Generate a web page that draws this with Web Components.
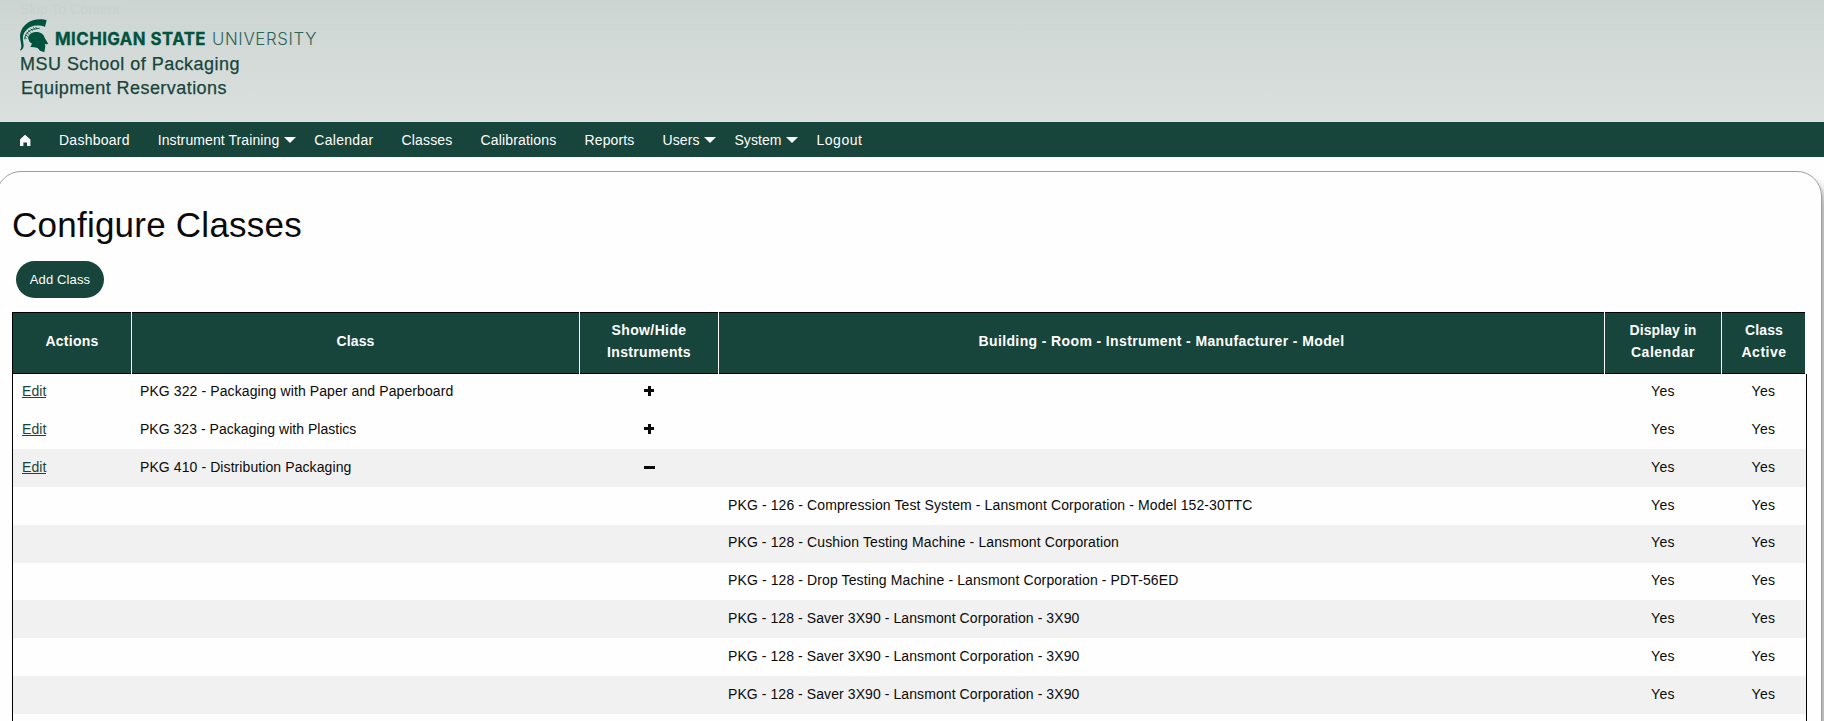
<!DOCTYPE html>
<html lang="en">
<head>
<meta charset="utf-8">
<title>Configure Classes</title>
<style>
html,body{margin:0;height:100%;overflow:hidden;background:#fefefe;font-family:"Liberation Sans",Arial,sans-serif;color:#0a0a0a}
</style>
</head>
<body>
<app-page></app-page>
<script>
const define=(name,html,setup)=>customElements.define(name,class extends HTMLElement{
  connectedCallback(){
    if(this.shadowRoot)return;
    const t=document.createElement('template');
    t.innerHTML=typeof html==='function'?html(this):html;
    this.attachShadow({mode:'open'}).append(t.content.cloneNode(true));
    if(setup)setup(this);
  }
});

/* Text tracked out to a given width */
define('fit-text','<style>:host{display:inline-block;white-space:nowrap;text-align:left}span{display:inline-block}</style><span><slot></slot></span>',el=>{
  const w=+el.getAttribute('w'),s=el.shadowRoot.querySelector('span');
  const n=el.textContent.length,nat=s.getBoundingClientRect().width;
  s.style.letterSpacing=((w-nat)/n)+'px';
  el.style.width=w+'px';
});

define('site-header',`<style>
:host{display:block;box-sizing:border-box;height:122px;padding-left:20px;background:linear-gradient(#cdd5d2,#dae0de);color:#18453b}
.skip{display:block;height:17px;line-height:15px;font-size:14px;color:#c9d2ce;text-decoration:underline}
.top{padding-top:2px}
.logo{display:flex;height:34px;color:#00533e;font-family:Inter,sans-serif;font-size:16.8px;line-height:22px}
svg{width:29px;height:34px;display:block}
.logo fit-text{margin-top:8.5px}
.b{font-weight:700;margin-left:6px;-webkit-text-stroke:.3px}.l{font-weight:300;margin-left:6px;color:#2a6656}
.t{display:block;font-size:18px;line-height:24px;height:24px;-webkit-text-stroke:.25px}
.t+.t{margin-left:1px}
.titles{margin-top:-1px}
</style>
<div class="top"><fit-text class="skip" w="100">Skip To Content</fit-text></div>
<div class="logo"><svg viewBox="60 56 87 102" fill="#00533e">
<path d="M140 60C130 56 112 56 99 60C78 67 62 84 60 106C60 119 64 128 64 138C64 144 61 147 60 151C66 149 71 144 71 137C71 127 68 120 69 109C71 94 84 80 102 76C115 74 126 76 135 79Z"/>
<path d="M84 113C86 101 97 95 109 95C123 95 131 102 134 112L145 131L134 132L136 137L133 156L120 151L113 143L103 141L91 140L96 130L89 125Z"/>
<path d="M74 117C75 103 84 91 98 87L119 84M74 110l6 6M76 103l8 6M80 96l7 6M85 90l7 6M92 85l6 6M100 81l4 6M107 80l4 6" fill="none" stroke="#00533e" stroke-width="2.6"/>
</svg><fit-text class="b" w="151">MICHIGAN STATE</fit-text><fit-text class="l" w="105">UNIVERSITY</fit-text></div>
<div class="titles"><fit-text class="t" w="220">MSU School of Packaging</fit-text><fit-text class="t" w="206">Equipment Reservations</fit-text></div>`);

define('nav-item',el=>`<style>
:host{display:flex;align-items:center;margin-right:28px;color:#fefefe;font-size:14px;line-height:16px}
:host([menu]){margin-right:18px}
i{width:0;border:6px solid transparent;border-top-color:#fefefe;border-bottom:0;margin-left:5px}
</style><slot></slot>${el.hasAttribute('menu')?'<i></i>':''}`);

define('site-nav',`<style>
:host{display:flex;align-items:center;box-sizing:border-box;height:35px;padding:1px 0 0 20px;background:#18453b}
svg{width:11px;height:11px;margin-right:28px;display:block}
</style><svg viewBox="0 0 11 11" fill="#fefefe"><path d="M4.7 0H5.3L10.4 4.6V11H7V7.4H3.4V11H0V4.6Z"/></svg>
<nav-item><fit-text w="70.7">Dashboard</fit-text></nav-item>
<nav-item menu><fit-text w="121.6">Instrument Training</fit-text></nav-item>
<nav-item><fit-text w="59.2">Calendar</fit-text></nav-item>
<nav-item><fit-text w="51">Classes</fit-text></nav-item>
<nav-item><fit-text w="76">Calibrations</fit-text></nav-item>
<nav-item><fit-text w="50">Reports</fit-text></nav-item>
<nav-item menu><fit-text w="37">Users</fit-text></nav-item>
<nav-item menu><fit-text w="47">System</fit-text></nav-item>
<nav-item><fit-text w="46">Logout</fit-text></nav-item>`);

define('pill-button',`<style>
:host{display:flex;align-items:center;justify-content:center;width:88px;height:37px;border-radius:18.5px;background:#18453b;color:#fefefe;font-size:13px;line-height:15px}
</style><slot></slot>`);

define('toggle-icon',el=>`<style>:host{display:block;width:11px;height:10px}svg{display:block}</style>
<svg width="11" height="10" fill="#0a0a0a">${el.hasAttribute('open')?'<path d="M0 4h11v3H0z"/>':'<path d="M0 3h4V0h3v3h3v3H7v4H4V6H0z"/>'}</svg>`);

const cols='grid-template-columns:119px 448px 139px 886px 117px 84px;';
define('table-head',`<style>
:host{display:grid;${cols}height:62px;box-sizing:border-box;border:solid #000;border-width:1px 0 1px 0;background:#18453b;color:#fefefe;font-weight:bold;font-size:14px;line-height:22px;width:1793px}
div{display:flex;flex-direction:column;align-items:center;justify-content:center;margin:-1px 0;padding-bottom:4px;border-right:1px solid #fefefe}
div:last-child{border:0}
</style>
<div><fit-text w="53">Actions</fit-text></div><div><fit-text w="38">Class</fit-text></div>
<div><fit-text w="75">Show/Hide</fit-text><fit-text w="84">Instruments</fit-text></div>
<div><fit-text w="366">Building - Room - Instrument - Manufacturer - Model</fit-text></div>
<div><fit-text w="67">Display in</fit-text><fit-text w="64">Calendar</fit-text></div>
<div><fit-text w="38">Class</fit-text><fit-text w="45">Active</fit-text></div>`);

define('class-row',el=>{
  const g=a=>el.getAttribute(a),t=g('toggle');
  const yes=g('w')?'<fit-text w="24">Yes</fit-text>':'';
  return `<style>
:host{display:grid;${cols}height:37.8px;font-size:14px;line-height:16px}
:host([shade]){background:#f1f1f1}
div{padding-top:9.6px;display:flex}
.c{justify-content:center}.a{padding-left:9px}.n{padding-left:8px}.i{padding-left:9px}.y{padding-right:1px}
a{color:#18453b;height:14px;border-bottom:1px solid #18453b}
toggle-icon{margin-top:3px}
</style>
<div class="a">${t?'<a><fit-text w="24.4">Edit</fit-text></a>':''}</div>
<div class="n">${g('name')?`<fit-text w="${g('w')}">${g('name')}</fit-text>`:''}</div>
<div class="c">${t?`<toggle-icon ${t}></toggle-icon>`:''}</div>
<div class="i">${g('tool')?`<fit-text w="${g('w')}">${g('tool')}</fit-text>`:''}</div>
<div class="c y">${yes}</div>
<div class="c y">${yes}</div>`;
});

define('class-table',`<style>
:host{display:block;width:1795px}
.body{box-sizing:border-box;width:1795px;margin-top:-.4px;border:solid #000;border-width:0 1px}
table-head{margin-right:2px;border-left:1px solid #000;position:relative}
</style><table-head></table-head><div class="body">
<class-row toggle="closed" w="313.4" name="PKG 322 - Packaging with Paper and Paperboard"></class-row>
<class-row toggle="closed" w="216.4" name="PKG 323 - Packaging with Plastics"></class-row>
<class-row shade toggle="open" w="211.4" name="PKG 410 - Distribution Packaging"></class-row>
<class-row w="524.4" tool="PKG - 126 - Compression Test System - Lansmont Corporation - Model 152-30TTC"></class-row>
<class-row shade w="391" tool="PKG - 128 - Cushion Testing Machine - Lansmont Corporation"></class-row>
<class-row w="450.4" tool="PKG - 128 - Drop Testing Machine - Lansmont Corporation - PDT-56ED"></class-row>
<class-row shade w="351.4" tool="PKG - 128 - Saver 3X90 - Lansmont Corporation - 3X90"></class-row>
<class-row w="351.4" tool="PKG - 128 - Saver 3X90 - Lansmont Corporation - 3X90"></class-row>
<class-row shade w="351.4" tool="PKG - 128 - Saver 3X90 - Lansmont Corporation - 3X90"></class-row>
<class-row></class-row></div>`);

define('content-panel',`<style>
:host{display:block;box-sizing:border-box;width:1826px;height:640px;margin:14px 0 0 -4px;padding-left:15px;border:1px solid #97a29f;border-radius:25px;background:#fefefe;box-shadow:5px 10px 10px #aaa}
</style><slot></slot>`);

define('app-page',`<style>
:host{display:block;height:721px;overflow:hidden}
h1{margin:0;padding-top:33px;height:56px;font-weight:400;font-size:35px;line-height:40px}
pill-button{margin:0 0 14px 4px}
</style><site-header></site-header><site-nav></site-nav>
<content-panel><h1><fit-text w="290">Configure Classes</fit-text></h1><pill-button><fit-text w="60.5">Add Class</fit-text></pill-button><class-table></class-table></content-panel>`);
</script>
</body>
</html>
